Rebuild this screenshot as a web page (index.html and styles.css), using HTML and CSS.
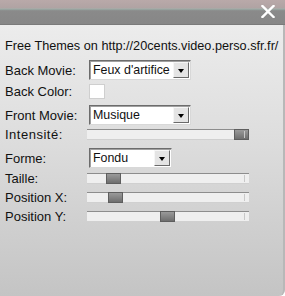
FILE: index.html
```html
<!DOCTYPE html>
<html lang="en">
<head>
    <meta charset="UTF-8">
    <title>Themes</title>
    <link rel="stylesheet" href="styles.css">
</head>
<body>
    <div id="window">
        <div class="titlebar">
            <svg class="close" width="14" height="13" viewBox="0 0 14 13">
                <path d="M1.5 1 L12.5 12 M12.5 1 L1.5 12" stroke="#fff" stroke-width="2.4" stroke-linecap="square"/>
            </svg>
        </div>
        <div class="panel">
            <div class="info">Free Themes on http://20cents.video.perso.sfr.fr/</div>
            <div class="row row-select first">
                <label>Back Movie:</label>
                <div class="select wide"><span>Feux d'artifice</span><i class="arrow"></i></div>
            </div>
            <div class="row row-color">
                <label>Back Color:</label>
                <div class="swatch"></div>
            </div>
            <div class="row row-select gap-front">
                <label>Front Movie:</label>
                <div class="select wide"><span>Musique</span><i class="arrow"></i></div>
            </div>
            <div class="row row-slider gap-small">
                <label class="spaced">Intensité:</label>
                <div class="slider"><div class="thumb" style="left: 147px"></div></div>
            </div>
            <div class="row row-select gap-forme">
                <label>Forme:</label>
                <div class="select narrow"><span>Fondu</span><i class="arrow"></i></div>
            </div>
            <div class="row row-slider gap-taille">
                <label>Taille:</label>
                <div class="slider"><div class="thumb" style="left: 19px"></div></div>
            </div>
            <div class="row row-slider gap-pos">
                <label>Position X:</label>
                <div class="slider"><div class="thumb" style="left: 21px"></div></div>
            </div>
            <div class="row row-slider gap-pos">
                <label>Position Y:</label>
                <div class="slider"><div class="thumb" style="left: 73px"></div></div>
            </div>
        </div>
    </div>
</body>
</html>
```
FILE: styles.css
```css
body {
    margin: 0;
    padding: 0;
    width: 285px;
    height: 296px;
    overflow: hidden;
    font-family: "Liberation Sans", Arial, sans-serif;
    color: #111;
}
#window {
    width: 285px;
    height: 296px;
    display: flex;
    flex-direction: column;
}
.titlebar {
    height: 24px;
    flex: none;
    display: flex;
    justify-content: flex-end;
    align-items: flex-start;
    background: linear-gradient(to bottom, #b9a9a9 0px, #b0a3a3 8px, #9fb0aa 9px, #8f9593 10px, #8a8a8a 11px, #878787 23px);
    border-bottom: 1px solid #7a7a7a;
}
.close {
    margin: 5px 10px 0 0;
}
.panel {
    flex: 1;
    padding: 13px 0 0 5px;
    background: linear-gradient(to bottom, #ececec 0%, #dedede 40%, #c4c4c4 100%);
    border-right: 2px solid #b8b8b8;
    border-bottom-right-radius: 6px;
}
.info {
    font-size: 12.7px;
    line-height: 16px;
    white-space: nowrap;
}
.row {
    display: flex;
    align-items: center;
}
.row label {
    width: 84px;
    flex: none;
    font-size: 13px;
    white-space: nowrap;
}
.row label.spaced {
    letter-spacing: 0.5px;
}
.row-select { height: 20px; }
.row-color { height: 15px; margin-top: 4px; }
.row-slider { height: 11px; }
.first { margin-top: 6px; }
.gap-front { margin-top: 6px; }
.gap-small { margin-top: 4px; }
.gap-forme { margin-top: 8px; }
.gap-taille { margin-top: 5px; }
.gap-pos { margin-top: 8px; }

.select {
    height: 20px;
    box-sizing: border-box;
    background: #fff;
    border-top: 1px solid #6c6c6c;
    border-left: 1px solid #6c6c6c;
    border-right: 1px solid #d8d8d8;
    border-bottom: 1px solid #d8d8d8;
    box-shadow: inset 1px 1px 0 #a0a0a0;
    display: flex;
    align-items: center;
    justify-content: space-between;
    padding: 1px 1px 1px 3px;
    font-size: 12.4px;
    white-space: nowrap;
    overflow: hidden;
}
.select.wide { width: 102px; }
.select.narrow { width: 83px; }
.arrow {
    width: 16px;
    height: 16px;
    flex: none;
    box-sizing: border-box;
    background: #e4e4e4;
    border-top: 1px solid #f6f6f6;
    border-left: 1px solid #f6f6f6;
    border-right: 1px solid #6a6a6a;
    border-bottom: 1px solid #6a6a6a;
    position: relative;
}
.arrow::after {
    content: "";
    position: absolute;
    left: 4px;
    top: 6px;
    border-left: 3.5px solid transparent;
    border-right: 3.5px solid transparent;
    border-top: 4px solid #000;
}
.swatch {
    width: 16px;
    height: 15px;
    box-sizing: border-box;
    background: #fff;
    border: 1px solid #cfcfcf;
}
.slider {
    position: relative;
    width: 162px;
    height: 11px;
    margin-left: -2px;
    box-sizing: border-box;
    background: #efefef;
    border-top: 1px solid #8d8d8d;
    border-bottom: 1px solid #d0d0d0;
}
.slider::after {
    content: "";
    position: absolute;
    right: 2px;
    top: 1px;
    width: 2px;
    height: 7px;
    border-left: 1px solid #c8c8c8;
}
.thumb {
    position: absolute;
    top: -1px;
    width: 15px;
    height: 11px;
    box-sizing: border-box;
    background: linear-gradient(to bottom, #9a9a9a, #6e6e6e);
    border: 1px solid #5e5e5e;
}
```
